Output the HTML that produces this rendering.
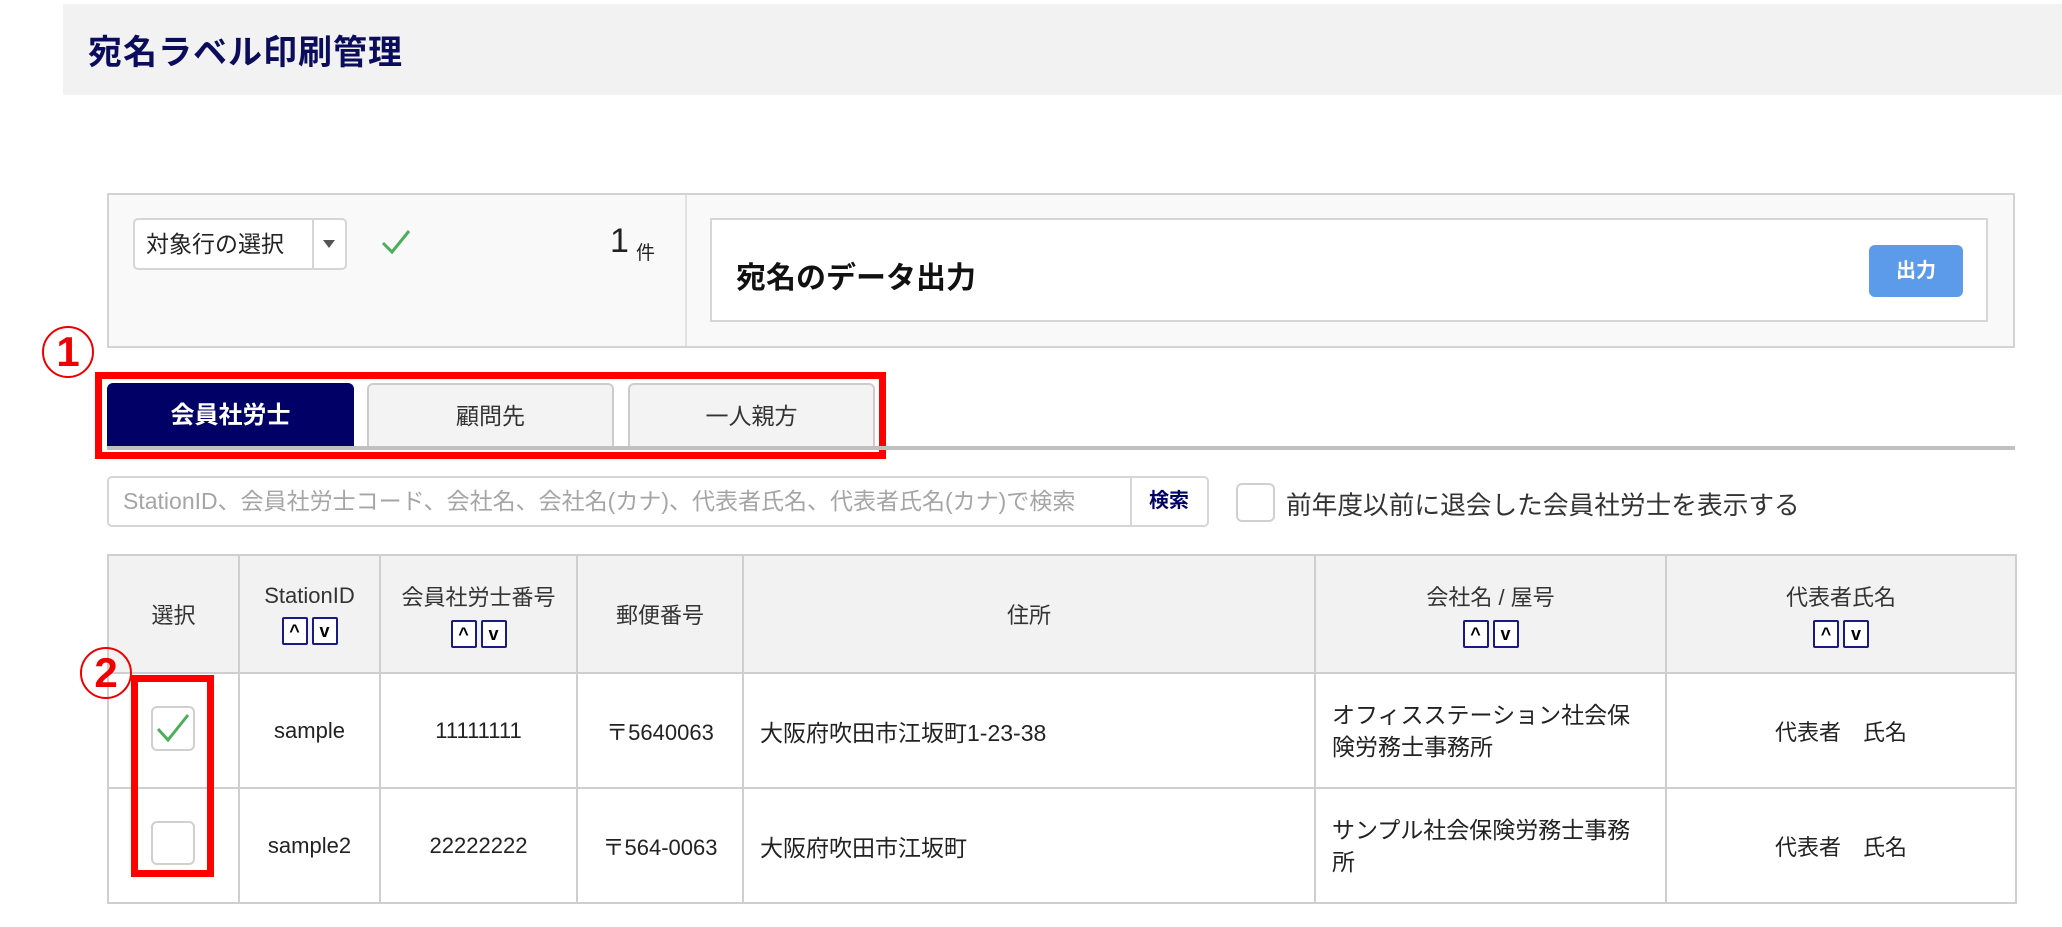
<!DOCTYPE html>
<html><head><meta charset="utf-8"><style>
*{box-sizing:border-box;margin:0;padding:0}
body{width:2062px;height:927px;background:#fff;position:relative;overflow:hidden;font-family:"Liberation Sans","Noto Sans CJK JP",sans-serif;color:#333}
.a{position:absolute}
.hdr{left:63px;top:4px;width:1999px;height:91px;background:#f2f2f2}
.title{left:88px;top:25px;font-size:34px;font-weight:bold;color:#0c0c5c;letter-spacing:1px}
.panel{left:107px;top:193px;width:1908px;height:155px;background:#f9f9f9;border:2px solid #d3d3d3}
.sel{left:133px;top:218px;width:214px;height:52px;background:#fff;border:2px solid #d6d6d6;border-radius:5px;font-size:23px;line-height:48px;padding-left:11px;color:#222;white-space:nowrap}
.sel .div{position:absolute;left:177px;top:0;width:2px;height:48px;background:#d6d6d6}
.sel .tri{position:absolute;left:188px;top:20px;border-left:6px solid transparent;border-right:6px solid transparent;border-top:8px solid #555}
.inner{left:710px;top:218px;width:1278px;height:104px;background:#fff;border:2px solid #d6d6d6}
.btn{left:1869px;top:245px;width:94px;height:52px;background:#5b9bea;border-radius:6px;color:#fff;font-weight:bold;font-size:20px;line-height:52px;text-align:center}
.redbox{border:7px solid #ff0000}
.circ{width:52px;height:52px;border:2px solid #e00;border-radius:50%;color:#e00;font-weight:bold;font-size:42px;line-height:48px;text-align:center}
.tab{top:383px;height:65px;width:247px;border:2px solid #ccc;border-bottom:none;border-radius:6px 6px 0 0;background:#f3f3f3;font-size:23px;line-height:62px;text-align:center;color:#333}
.tab.on{background:#000066;border-color:#000066;color:#fff;font-weight:bold;font-size:24px}
.tline{left:107px;top:446px;width:1908px;height:4px;background:#c0c0c0}
.search{left:107px;top:476px;width:1102px;height:51px;border:2px solid #d6d6d6;border-radius:5px;background:#fff}
.search .ph{position:absolute;left:14px;top:0;line-height:47px;font-size:23px;color:#a5a5a5;white-space:nowrap;overflow:hidden;width:1000px}
.search .sb{position:absolute;left:1021px;top:0;width:76px;height:47px;border-left:2px solid #d6d6d6;font-size:20px;font-weight:bold;color:#000066;line-height:47px;text-align:center;background:#fff;border-radius:0 4px 4px 0}
.cb{border:2px solid #d0d0d0;border-radius:6px;background:#fff}
table{position:absolute;left:107px;top:554px;border-collapse:collapse;font-size:22px;color:#222}
td,th{border:2px solid #cfcfcf;text-align:center;font-weight:normal;vertical-align:middle}
th{background:#f2f2f2;height:118px;color:#333}
td{height:115px;background:#fff}
.srt{display:inline-block;width:26px;height:28px;border:2px solid #1a1a80;border-radius:2px;margin:8px 2px 0;font-size:18px;font-weight:bold;line-height:24px;color:#000;background:#fff;vertical-align:top}
</style></head><body>
<div class="a hdr"></div>
<div class="a title">宛名ラベル印刷管理</div>

<div class="a panel"></div>
<div class="a" style="left:685px;top:195px;width:2px;height:151px;background:#e2e2e2"></div>
<div class="a sel">対象行の選択<span class="div"></span><span class="tri"></span></div>
<svg class="a" style="left:380px;top:228px" width="32" height="28" viewBox="0 0 32 28"><path d="M3 15 L12 24 L29 3" fill="none" stroke="#4cae5a" stroke-width="3"/></svg>
<div class="a" style="left:610px;top:222px;font-size:34px;color:#222">1</div>
<div class="a" style="left:636px;top:238px;font-size:19px;color:#222">件</div>
<div class="a inner"></div>
<div class="a" style="left:736px;top:253px;font-size:30px;font-weight:bold;color:#111">宛名のデータ出力</div>
<div class="a btn">出力</div>

<div class="a circ" style="left:42px;top:326px">1</div>
<div class="a redbox" style="left:95px;top:372px;width:791px;height:87px"></div>
<div class="a tab on" style="left:107px">会員社労士</div>
<div class="a tab" style="left:367px">顧問先</div>
<div class="a tab" style="left:628px">一人親方</div>
<div class="a tline"></div>

<div class="a search"><span class="ph">StationID、会員社労士コード、会社名、会社名(カナ)、代表者氏名、代表者氏名(カナ)で検索</span><span class="sb">検索</span></div>
<div class="a cb" style="left:1236px;top:483px;width:39px;height:39px"></div>
<div class="a" style="left:1286px;top:485px;font-size:25.7px;color:#333;white-space:nowrap">前年度以前に退会した会員社労士を表示する</div>

<table>
<tr><th style="width:131px">選択</th><th style="width:141px">StationID<br><span class="srt">^</span><span class="srt">v</span></th><th style="width:197px">会員社労士番号<br><span class="srt">^</span><span class="srt">v</span></th><th style="width:166px">郵便番号</th><th style="width:572px">住所</th><th style="width:351px">会社名 / 屋号<br><span class="srt">^</span><span class="srt">v</span></th><th style="width:350px">代表者氏名<br><span class="srt">^</span><span class="srt">v</span></th></tr>
<tr><td></td><td>sample</td><td>11111111</td><td>〒5640063</td><td style="text-align:left;padding-left:16px;font-size:23px">大阪府吹田市江坂町1-23-38</td><td style="text-align:left;padding-left:16px;line-height:32px;font-size:23px">オフィスステーション社会保<br>険労務士事務所</td><td>代表者　氏名</td></tr>
<tr><td></td><td>sample2</td><td>22222222</td><td>〒564-0063</td><td style="text-align:left;padding-left:16px;font-size:23px">大阪府吹田市江坂町</td><td style="text-align:left;padding-left:16px;line-height:32px;font-size:23px">サンプル社会保険労務士事務<br>所</td><td>代表者　氏名</td></tr>
</table>

<div class="a cb" style="left:151px;top:706px;width:44px;height:45px"></div>
<svg class="a" style="left:155px;top:712px" width="36" height="32" viewBox="0 0 36 32"><path d="M3 17 L13 28 L33 3" fill="none" stroke="#4cae5a" stroke-width="3"/></svg>
<div class="a cb" style="left:151px;top:821px;width:44px;height:44px"></div>
<div class="a circ" style="left:80px;top:647px">2</div>
<div class="a redbox" style="left:131px;top:675px;width:83px;height:202px"></div>
</body></html>
